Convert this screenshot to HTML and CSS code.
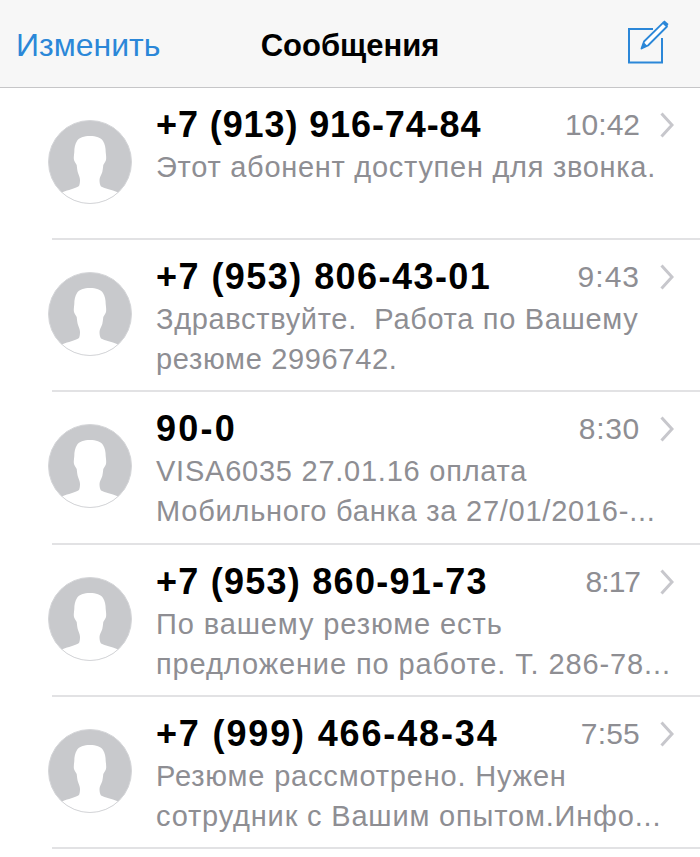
FILE: index.html
```html
<!DOCTYPE html>
<html lang="ru">
<head>
    <meta charset="UTF-8" />
    <title>Сообщения</title>
    <link rel="stylesheet" href="styles.css">
</head>
<body>
<svg class="defs" width="0" height="0">
    <clipPath id="avatarClip"><circle cx="42" cy="42" r="41.5"/></clipPath>
    <symbol id="avatar" viewBox="0 0 84 84">
        <circle cx="42" cy="42" r="41.5" fill="#c8c9cc"/>
        <path clip-path="url(#avatarClip)" fill="#fff" d="M42 16C36 16 31 17.500 29 21C27 24 26.300 28 26.300 32C26 35 25.500 38 26 40C26.500 42 27.800 43 28.700 45C29 48 29.300 50 29.700 52C30.500 55 32 57 32 60C32 63 31.500 65 31 66C27 68.500 20 70 15 72L10 74L10 84L74 84L74 74L69 72C64 70 57 68.500 53 66.500C52 65 51.500 63 51.500 60C51.500 57 53.500 55 54.300 52C54.700 50 55 48 55.300 45C56.200 43 57.500 42 58 40C58.500 38 58 35 57.700 32C57.700 28 57 24 55 21C53 17.500 48 16 42 16Z"/>
        <circle cx="42" cy="42" r="41.500" fill="none" stroke="#d4d5d8" stroke-width="1"/>
    </symbol>
    <symbol id="chevron" viewBox="0 0 14 26">
        <path d="M1.500 1.500L12 13L1.500 24.500" fill="none" stroke="#c7c7cc" stroke-width="3"/>
    </symbol>
</svg>

<header class="nav-bar">
    <a class="nav-edit">Изменить</a>
    <h1 class="nav-title">Сообщения</h1>
    <svg class="nav-compose" width="44" height="44" viewBox="0 0 44 44">
        <path d="M27 9H3V42.500H36V18" fill="none" stroke="#2b87d8" stroke-width="2"/>
        <path d="M15.500 28.500L18 21.500L37 2.800L41 6.500L22 25.500Z" fill="#fff" stroke="#2b87d8" stroke-width="1.800" stroke-linejoin="round"/>
        <path d="M15 29L17.500 22L21.500 26Z" fill="#2b87d8"/>
        <path d="M36.500 2L38.500.5L42.500 4L41 6.500Z" fill="#2b87d8"/>
    </svg>
</header>

<ul class="thread-list">
    <li class="thread">
        <svg class="avatar"><use href="#avatar"/></svg>
        <div class="thread-body">
            <div class="thread-head">
                <span class="thread-name">+7 (913) 916-74-84</span>
                <span class="thread-time">10:42</span>
                <svg class="chevron"><use href="#chevron"/></svg>
            </div>
            <p class="thread-preview">Этот абонент доступен для звонка.</p>
        </div>
    </li>
    <li class="thread">
        <svg class="avatar"><use href="#avatar"/></svg>
        <div class="thread-body">
            <div class="thread-head">
                <span class="thread-name">+7 (953) 806-43-01</span>
                <span class="thread-time">9:43</span>
                <svg class="chevron"><use href="#chevron"/></svg>
            </div>
            <p class="thread-preview">Здравствуйте.&nbsp; Работа по Вашему<br>резюме 2996742.</p>
        </div>
    </li>
    <li class="thread">
        <svg class="avatar"><use href="#avatar"/></svg>
        <div class="thread-body">
            <div class="thread-head">
                <span class="thread-name">90-0</span>
                <span class="thread-time">8:30</span>
                <svg class="chevron"><use href="#chevron"/></svg>
            </div>
            <p class="thread-preview">VISA6035 27.01.16 оплата<br>Мобильного банка за 27/01/2016-...</p>
        </div>
    </li>
    <li class="thread">
        <svg class="avatar"><use href="#avatar"/></svg>
        <div class="thread-body">
            <div class="thread-head">
                <span class="thread-name">+7 (953) 860-91-73</span>
                <span class="thread-time">8:17</span>
                <svg class="chevron"><use href="#chevron"/></svg>
            </div>
            <p class="thread-preview">По вашему резюме есть<br>предложение по работе. Т. 286-78...</p>
        </div>
    </li>
    <li class="thread">
        <svg class="avatar"><use href="#avatar"/></svg>
        <div class="thread-body">
            <div class="thread-head">
                <span class="thread-name">+7 (999) 466-48-34</span>
                <span class="thread-time">7:55</span>
                <svg class="chevron"><use href="#chevron"/></svg>
            </div>
            <p class="thread-preview">Резюме рассмотрено. Нужен<br>сотрудник с Вашим опытом.Инфо...</p>
        </div>
    </li>
</ul>
</body>
</html>
```
FILE: styles.css
```css
html, body {
    height: 857px;
    overflow: hidden;
}
body {
    margin: 0;
    background-color: #fff;
    font-family: "Liberation Sans", Arial, sans-serif;
}
.defs {
    display: block;
    height: 0;
}
.nav-bar {
    display: grid;
    grid-template-columns: 1fr auto 1fr;
    align-items: center;
    box-sizing: border-box;
    height: 88px;
    padding: 4px 16px 0;
    background-color: #f7f7f7;
    border-bottom: 1px solid #c6c6c8;
}
.nav-edit {
    font-size: 32px;
    color: #2b87d8;
}
.nav-title {
    margin: 0;
    font-size: 31px;
    font-weight: bold;
    color: #000;
}
.nav-compose {
    justify-self: end;
    margin: -8px 14px 0 0;
}
.thread-list {
    list-style: none;
    margin: 0;
    padding: 0;
}
.thread {
    display: flex;
    align-items: flex-start;
    box-sizing: border-box;
    height: 152.2px;
    margin-left: 52px;
    border-bottom: 2px solid #e2e2e4;
}
/* the source photo is stretched a little differently on every row */
.thread:nth-child(1) { --name-track: .9px; --time-track: 0; --preview-track: .72px; }
.thread:nth-child(2) { --name-track: 1.45px; --time-track: 1px; --preview-track: .67px; }
.thread:nth-child(3) { --name-track: 2.2px; --time-track: .7px; --preview-track: .76px; }
.thread:nth-child(4) { --name-track: 1.25px; --time-track: -1px; --preview-track: .89px; }
.thread:nth-child(5) { --name-track: 1.85px; --time-track: .2px; --preview-track: .82px; }
.avatar {
    flex: none;
    width: 84px;
    height: 84px;
    margin: 32px 0 0 -4px;
}
.thread-body {
    flex: 1;
    min-width: 0;
    margin-left: 24px;
    padding: 16px 26px 0 0;
}
.thread-head {
    display: flex;
    align-items: center;
    height: 42px;
}
.thread-name {
    flex: 1;
    font-size: 36px;
    font-weight: bold;
    letter-spacing: var(--name-track);
    color: #000;
}
.thread-time {
    font-size: 30px;
    letter-spacing: var(--time-track);
    color: #8e8e93;
}
.chevron {
    flex: none;
    width: 14px;
    height: 26px;
    margin-left: 20px;
}
.thread-preview {
    margin: 1px 0 0;
    font-size: 29px;
    line-height: 40px;
    letter-spacing: var(--preview-track);
    color: #8e8e93;
    white-space: nowrap;
}
```
